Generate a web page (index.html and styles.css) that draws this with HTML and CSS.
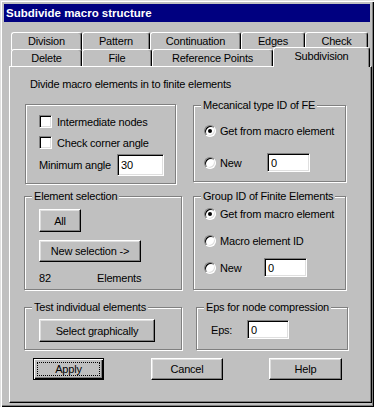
FILE: index.html
```html
<!DOCTYPE html>
<html lang="en">

<head>
  <meta charset="UTF-8">
  <title>Subdivide macro structure</title>
  <link rel="stylesheet" href="styles.css">
</head>

<body>
  <div class="window">
    <div class="titlebar">Subdivide macro structure</div>

    <div class="tabs">
      <div class="tab-row back">
        <div class="tab tab-division">Division</div>
        <div class="tab tab-pattern">Pattern</div>
        <div class="tab tab-continuation">Continuation</div>
        <div class="tab tab-edges">Edges</div>
        <div class="tab tab-check">Check</div>
      </div>
      <div class="tab-row front">
        <div class="tab tab-delete">Delete</div>
        <div class="tab tab-file">File</div>
        <div class="tab tab-refpoints">Reference Points</div>
        <div class="tab tab-subdivision active">Subdivision</div>
      </div>
    </div>

    <div class="panel">
      <p class="intro">Divide macro elements in to finite elements</p>

      <div class="row row-a">
        <div class="group box-options">
          <div class="check"><span class="checkbox"></span>Intermediate nodes</div>
          <div class="check second"><span class="checkbox"></span>Check corner angle</div>
          <div class="field">
            <span class="field-label angle-label">Minimum angle</span>
            <span class="input input-angle">30</span>
          </div>
        </div>

        <div class="group box-mech">
          <span class="legend">Mecanical type ID of FE</span>
          <div class="option"><span class="radio on"></span>Get from macro element</div>
          <div class="option option-new mech-new">
            <span class="radio"></span><span class="new-label mech-label">New</span>
            <span class="input input-small">0</span>
          </div>
        </div>
      </div>

      <div class="row row-b">
        <div class="group box-selection">
          <span class="legend">Element selection</span>
          <div class="btn btn-all">All</div>
          <div class="btn btn-newsel">New selection -&gt;</div>
          <div class="count"><span class="count-num">82</span>Elements</div>
        </div>

        <div class="group box-groupid">
          <span class="legend">Group ID of Finite Elements</span>
          <div class="option"><span class="radio on"></span>Get from macro element</div>
          <div class="option opt-macro"><span class="radio"></span>Macro element ID</div>
          <div class="option option-new group-new">
            <span class="radio"></span><span class="new-label group-label">New</span>
            <span class="input input-small">0</span>
          </div>
        </div>
      </div>

      <div class="row row-c">
        <div class="group box-test">
          <span class="legend">Test individual elements</span>
          <div class="btn btn-select">Select graphically</div>
        </div>

        <div class="group box-eps">
          <span class="legend">Eps for node compression</span>
          <div class="field">
            <span class="field-label eps-label">Eps:</span>
            <span class="input input-eps">0</span>
          </div>
        </div>
      </div>

      <div class="actions">
        <div class="btn btn-apply default"><span class="focus">Apply</span></div>
        <div class="btn btn-cancel">Cancel</div>
        <div class="btn btn-help">Help</div>
      </div>
    </div>
  </div>
</body>

</html>
```

FILE: styles.css
```css
body {
  margin: 0;
  background-color: #c0c0c0;
  font-family: 'Liberation Sans', Arial, sans-serif;
  font-size: 11px;
  letter-spacing: -0.2px;
  color: #000000;
}

.window {
  box-sizing: border-box;
  width: 374px;
  height: 407px;
  padding: 4px 0 0 4px;
  background-color: #c0c0c0;
  /* classic raised window frame */
  box-shadow: inset 1px 1px 0 #dfdfdf, inset 2px 2px 0 #ffffff,
    inset -1px -1px 0 #000000, inset -2px -2px 0 #808080;
}

.titlebar {
  width: 366px;
  height: 18px;
  padding-left: 2px;
  box-sizing: border-box;
  background-color: #000080;
  color: #ffffff;
  font-weight: bold;
  font-size: 11.5px;
  letter-spacing: 0;
  line-height: 18px;
}

/* Tabs */

.tabs {
  position: relative;
  z-index: 2;
  margin: 10px 0 0 7px;
}

.tab-row {
  display: flex;
  align-items: flex-start;
}

.tab {
  box-sizing: border-box;
  text-align: center;
  background-color: #c0c0c0;
  border-top: 1px solid #ffffff;
  border-left: 1px solid #ffffff;
  border-right: 1px solid #000000;
  border-top-left-radius: 3px;
  border-top-right-radius: 3px;
  box-shadow: inset -1px 0 0 #808080;
}

.back .tab {
  height: 18px;
  line-height: 17px;
}

.front {
  margin-top: -1px;
}

.front .tab {
  height: 17px;
  line-height: 16px;
}

.front .tab.active {
  height: 20px;
  margin: -2px 0 -1px;
}

.tab-division { width: 71px; }
.tab-pattern { width: 68px; }
.tab-continuation { width: 91px; }
.tab-edges { width: 64px; }
.tab-check { width: 63px; }
.tab-delete { width: 71px; }
.tab-file { width: 70px; }
.tab-refpoints { width: 121px; }
.tab-subdivision { width: 97px; }

/* Page panel */

.panel {
  box-sizing: border-box;
  width: 363px;
  height: 337px;
  margin-left: 5px;
  padding-left: 14px;
  border-top: 1px solid #ffffff;
  border-left: 1px solid #ffffff;
  border-right: 1px solid #000000;
  border-bottom: 1px solid #000000;
  box-shadow: inset -1px -1px 0 #808080;
}

.intro {
  margin: 11px 0 0 6px;
  line-height: 13px;
}

.row {
  display: flex;
  align-items: flex-start;
}

.row-a { margin-top: 13px; }
.row-b { margin-top: 12px; }
.row-c { margin-top: 17px; }

.group {
  position: relative;
  box-sizing: border-box;
  border: 1px solid #808080;
  box-shadow: 1px 1px 0 #ffffff, inset 1px 1px 0 #ffffff;
}

.legend {
  position: absolute;
  top: -7px;
  left: 7px;
  padding: 0 2px;
  background-color: #c0c0c0;
  line-height: 13px;
  white-space: nowrap;
}

.box-options {
  width: 151px;
  height: 80px;
  margin-left: 1px;
  padding: 10px 0 0 13px;
}

.box-mech {
  width: 153px;
  height: 77px;
  margin: 1px 0 0 17px;
  padding: 18px 0 0 10px;
}

.box-selection {
  width: 158px;
  height: 94px;
  padding: 12px 0 0 14px;
}

.box-groupid {
  width: 153px;
  height: 94px;
  margin-left: 11px;
  padding: 10px 0 0 10px;
}

.box-test {
  width: 158px;
  height: 43px;
  padding: 11px 0 0 14px;
}

.box-eps {
  width: 152px;
  height: 43px;
  margin-left: 14px;
  padding: 12px 0 0 14px;
}

/* Checkboxes, radios, inputs */

.check {
  display: flex;
  align-items: center;
  height: 13px;
}

.check.second {
  margin-top: 8px;
}

.checkbox {
  box-sizing: border-box;
  width: 13px;
  height: 13px;
  margin-right: 5px;
  background-color: #ffffff;
  border: 1px solid;
  border-color: #808080 #ffffff #ffffff #808080;
  box-shadow: inset 1px 1px 0 #000000, inset -1px -1px 0 #dfdfdf;
}

.field {
  display: flex;
  align-items: center;
}

.box-options .field {
  margin-top: 5px;
}

.angle-label { width: 78px; }
.eps-label { width: 36px; }

.input {
  box-sizing: border-box;
  display: flex;
  align-items: center;
  padding-left: 3px;
  background-color: #ffffff;
  border: 1px solid;
  border-color: #808080 #ffffff #ffffff #808080;
  box-shadow: inset 1px 1px 0 #000000, inset -1px -1px 0 #dfdfdf;
}

.input-angle { width: 47px; height: 22px; }
.input-small { width: 43px; height: 19px; }
.input-eps { width: 42px; height: 19px; }

.option {
  display: flex;
  align-items: center;
  height: 14px;
}

.option-new { height: 19px; }
.mech-new { margin-top: 15px; }
.opt-macro { margin-top: 13px; }
.group-new { margin-top: 10px; }

.mech-label { width: 47px; }
.group-label { width: 44px; }

.radio {
  position: relative;
  box-sizing: border-box;
  width: 12px;
  height: 12px;
  margin-right: 4px;
  border-radius: 50%;
  background-color: #ffffff;
  border: 1px solid;
  border-color: #808080 #ffffff #ffffff #808080;
  box-shadow: inset 1px 1px 0 #000000, inset -1px -1px 0 #dfdfdf;
}

.radio.on::after {
  content: '';
  position: absolute;
  left: 3px;
  top: 3px;
  width: 4px;
  height: 4px;
  border-radius: 50%;
  background-color: #000000;
}

/* Buttons */

.btn {
  box-sizing: border-box;
  display: flex;
  align-items: center;
  justify-content: center;
  background-color: #c0c0c0;
  border: 1px solid;
  border-color: #ffffff #000000 #000000 #ffffff;
  box-shadow: inset -1px -1px 0 #808080, inset 1px 1px 0 #dfdfdf;
}

.btn-all { width: 42px; height: 23px; }
.btn-newsel { width: 102px; height: 22px; margin-top: 8px; }
.btn-select { width: 116px; height: 23px; }

.count {
  display: flex;
  margin-top: 10px;
  line-height: 13px;
}

.count-num { width: 58px; }

.actions {
  display: flex;
  margin-top: 8px;
}

.actions .btn {
  height: 22px;
}

.btn-apply { width: 71px; margin-left: 9px; }
.btn-cancel { width: 72px; margin-left: 47px; }
.btn-help { width: 73px; margin-left: 46px; }

.btn.default {
  border: 1px solid #000000;
  box-shadow: inset 1px 1px 0 #ffffff, inset -1px -1px 0 #000000,
    inset -2px -2px 0 #808080;
}

.focus {
  flex: 1;
  align-self: stretch;
  margin: 3px;
  display: flex;
  align-items: center;
  justify-content: center;
  border: 1px dotted #000000;
}
```
